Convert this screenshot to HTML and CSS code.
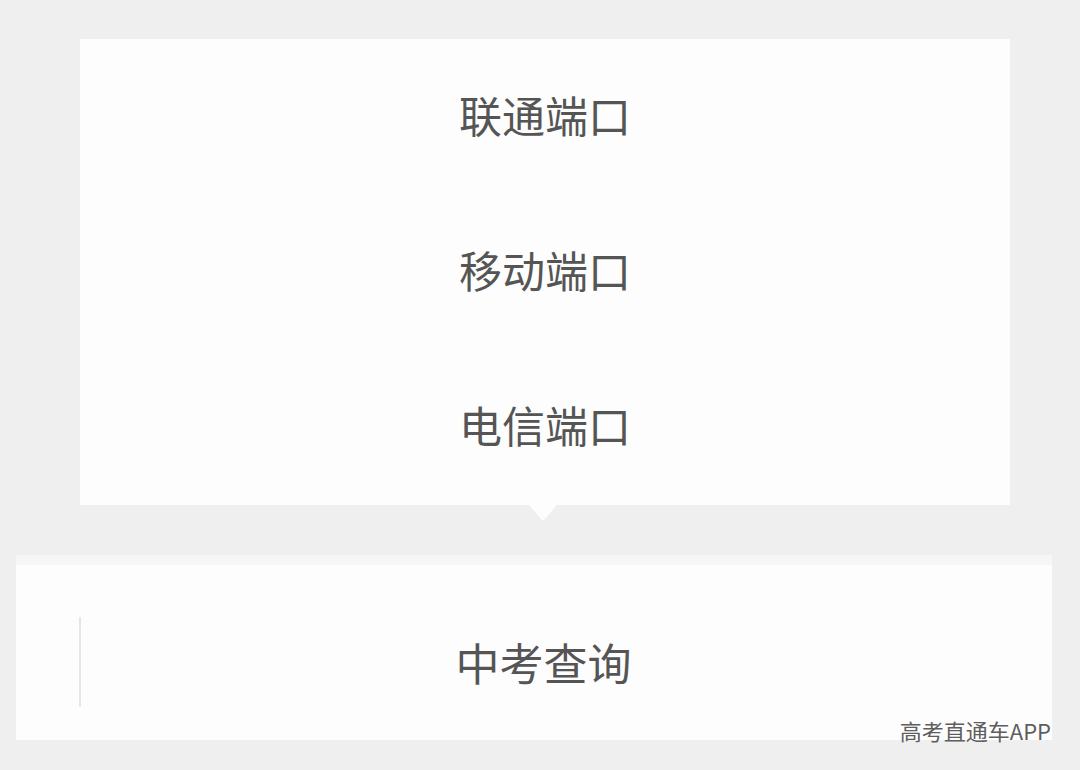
FILE: index.html
```html
<!DOCTYPE html>
<html lang="zh-CN">
<head>
<meta charset="utf-8">
<link rel="stylesheet" href="styles.css">
</head>
<body>
<div class="page">
  <div class="popup">
    <div class="item">联通端口</div>
    <div class="item">移动端口</div>
    <div class="item">电信端口</div>
  </div>
  <div class="bar">
    <div class="divider"></div>
    <div class="bar-label">中考查询</div>
  </div>
  <div class="watermark">高考直通车APP</div>
</div>
</body>
</html>
```
FILE: styles.css
```css
html, body {
  margin: 0;
  padding: 0;
  background: #efefef;
  font-family: "Noto Sans CJK SC", "Noto Sans", sans-serif;
}
.page {
  position: relative;
  width: 1080px;
  height: 770px;
  overflow: hidden;
}
.popup {
  position: relative;
  margin: 39px 0 0 80px;
  width: 930px;
  height: 466px;
  background: #fdfdfd;
  display: grid;
  grid-template-rows: 1fr 1fr 1fr;
}
.popup::after {
  content: "";
  position: absolute;
  left: 449px;
  bottom: -16px;
  border-left: 14px solid transparent;
  border-right: 14px solid transparent;
  border-top: 16px solid #fdfdfd;
}
.item {
  display: flex;
  align-items: center;
  justify-content: center;
  font-size: 43px;
  color: #555555;
  padding-bottom: 6px;
}
.bar {
  position: relative;
  margin: 50px 0 0 16px;
  width: 1036px;
  height: 155px;
  border-top: 10px solid #f6f6f6;
  background: #fdfdfd;
  display: flex;
  align-items: center;
  justify-content: center;
  padding-top: 20px;
}
.divider {
  position: absolute;
  left: 63px;
  top: 52px;
  width: 2px;
  height: 90px;
  background: #e6e6e6;
}
.bar-label {
  font-size: 44px;
  color: #555555;
  padding-left: 19px;
  padding-bottom: 2px;
}
.watermark {
  position: absolute;
  right: 29px;
  top: 714px;
  font-size: 22px;
  color: #5e5e5e;
  font-family: "Noto Sans CJK SC", "Noto Sans", sans-serif;
}
```
